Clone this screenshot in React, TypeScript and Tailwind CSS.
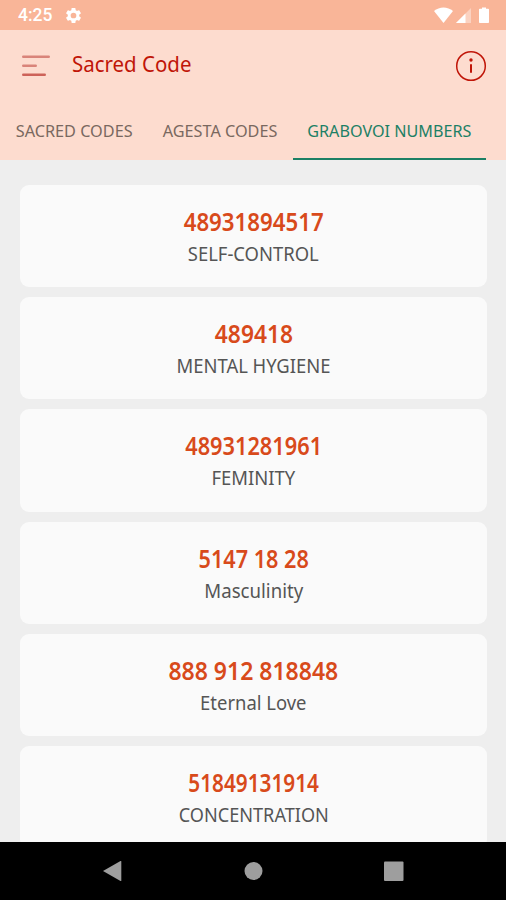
import { useState } from 'react';
import clsx from 'clsx';

const tabs = [
  { label: 'SACRED CODES', box: 'w-[148px]', fit: 'scale-x-[0.955]' },
  { label: 'AGESTA CODES', box: 'w-[145px]', fit: 'scale-x-[0.955]' },
  { label: 'GRABOVOI NUMBERS', box: 'w-[193px]', fit: 'scale-x-[0.95]' },
];

const codes = [
  { code: '48931894517', name: 'SELF-CONTROL', codeFit: 'scale-x-[0.89]', nameFit: 'scale-x-[0.945]' },
  { code: '489418', name: 'MENTAL HYGIENE', codeFit: 'scale-x-[0.91]', nameFit: 'scale-x-[0.945]' },
  { code: '48931281961', name: 'FEMINITY', codeFit: 'scale-x-[0.87]', nameFit: 'scale-x-[0.945]' },
  { code: '5147 18 28', name: 'Masculinity', codeFit: 'scale-x-[0.865]', nameFit: 'scale-x-[0.955]' },
  { code: '888 912 818848', name: 'Eternal Love', codeFit: 'scale-x-[0.92]', nameFit: 'scale-x-[0.945]' },
  { code: '51849131914', name: 'CONCENTRATION', codeFit: 'scale-x-[0.83]', nameFit: 'scale-x-[0.93]' },
];

const StatusBar = () => (
  <div className="flex h-[30px] shrink-0 items-center bg-[#f9b598] pl-[18px] pr-[16px] text-white">
    <span className="pt-[2px] font-['Roboto',sans-serif] text-[17.5px] font-medium leading-none">4:25</span>
    <svg className="ml-[12px] size-[19px]" viewBox="0 0 24 24" fill="currentColor">
      <path d="M19.14 12.94c.04-.3.06-.61.06-.94 0-.32-.02-.64-.07-.94l2.03-1.58a.49.49 0 0 0 .12-.61l-1.92-3.32a.49.49 0 0 0-.59-.22l-2.39.96c-.5-.38-1.03-.7-1.62-.94l-.36-2.54a.48.48 0 0 0-.48-.41h-3.84c-.24 0-.43.17-.47.41l-.36 2.54c-.59.24-1.13.57-1.62.94l-2.39-.96a.48.48 0 0 0-.59.22L2.74 8.87a.48.48 0 0 0 .12.61l2.03 1.58c-.05.3-.09.63-.09.94s.02.64.07.94l-2.03 1.58a.49.49 0 0 0-.12.61l1.92 3.32c.12.22.37.29.59.22l2.39-.96c.5.38 1.03.7 1.62.94l.36 2.54c.05.24.24.41.48.41h3.84c.24 0 .44-.17.47-.41l.36-2.54c.59-.24 1.13-.56 1.62-.94l2.39.96c.22.08.47 0 .59-.22l1.92-3.32a.48.48 0 0 0-.12-.61l-2.01-1.58zM12 15.6A3.6 3.6 0 1 1 12 8.4a3.6 3.6 0 0 1 0 7.2z" />
    </svg>
    <svg className="ml-auto h-[17px] w-[56px]" viewBox="0 0 56 17" fill="currentColor">
      <path d="M0 4C5.500-.8 13.500-.8 19 4L9.500 16z" />
      <path d="M37 1v15H22z" opacity=".4" />
      <path d="M31.500 6.500V16H22z" />
      <path d="M48 1.800V.500h4v1.300h2.200c.5 0 .8.300.8.800V15.200c0 .5-.3.800-.8.800h-8.400c-.5 0-.8-.3-.8-.8V2.600c0-.5.300-.8.800-.8z" />
    </svg>
  </div>
);

const Header = () => (
  <header className="flex h-[72px] shrink-0 items-center pl-[22px] pr-[19px]">
    <button aria-label="Menu">
      <svg className="h-[22px] w-[29px]" viewBox="0 0 29 22" fill="none" strokeWidth="2.6" strokeLinecap="round">
        <path d="M1.300 1.800H26.700M1.300 10.800H13.700" stroke="#d9847a" />
        <path d="M1.300 19.800H22.700" stroke="#cd6259" />
      </svg>
    </button>
    <h1 className="mb-[7px] ml-[21px] origin-left scale-x-[0.93] text-[22px] leading-none text-[#c01508]">Sacred Code</h1>
    <button aria-label="Info" className="ml-auto text-[#c01508]">
      <svg className="size-[32px]" viewBox="0 0 32 32" fill="none" stroke="currentColor">
        <circle cx="16" cy="16" r="14.300" strokeWidth="1.500" />
        <path d="M16 14.200v8.500" strokeWidth="2" />
        <circle cx="16" cy="10" r="1.700" fill="currentColor" stroke="none" />
      </svg>
    </button>
  </header>
);

const App = () => {
  const [active, setActive] = useState(2);

  return (
    <div className="flex h-[900px] w-[506px] flex-col overflow-hidden bg-[#eeeeee] font-['Noto_Sans','Open_Sans',sans-serif]">
      <StatusBar />
      <div className="flex h-[130px] shrink-0 flex-col bg-[#fddccf]">
        <Header />
        <nav className="flex h-[58px] whitespace-nowrap">
          {tabs.map((tab, i) => (
            <button
              key={tab.label}
              onClick={() => setActive(i)}
              className={clsx(
                'flex shrink-0 items-center justify-center border-b-2 text-[17px] leading-none',
                tab.box,
                active === i ? 'border-[#1c8065] text-[#1c8065]' : 'border-transparent text-[#796860]',
              )}
            >
              <span className={tab.fit}>{tab.label}</span>
            </button>
          ))}
        </nav>
      </div>

      <main className="flex min-h-0 flex-1 flex-col gap-[10px] overflow-hidden pl-[20px] pr-[19px] pt-[25px]">
        {codes.map((item) => (
          <div
            key={item.code}
            className="flex h-[102.200px] shrink-0 flex-col items-center whitespace-nowrap rounded-[9px] bg-[#fafafa] pt-[20px]"
          >
            <span className={clsx('text-[25px] font-semibold leading-[32px] text-[#d84a1b]', item.codeFit)}>{item.code}</span>
            <span className={clsx('mt-px text-[19.500px] leading-[32px] text-[#555555]', item.nameFit)}>{item.name}</span>
          </div>
        ))}
      </main>

      <footer className="flex h-[58px] shrink-0 items-center justify-center bg-black text-[#9e9e9e]">
        <svg className="h-[24px] w-[302px]" viewBox="0 0 302 24" fill="currentColor">
          <path d="M1 12L18.500 2q.8-.4.800.5v19q0 .9-.8.500z" />
          <circle cx="151.500" cy="12" r="9" />
          <rect x="282" y="2.500" width="19.500" height="19.500" rx="1" />
        </svg>
      </footer>
    </div>
  );
};

export default App;
